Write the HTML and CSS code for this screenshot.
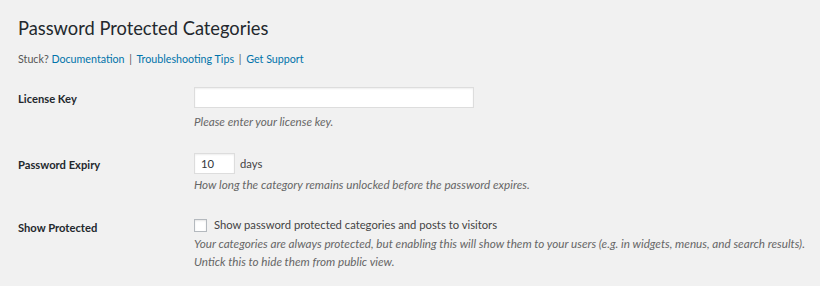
FILE: index.html
```html
<!DOCTYPE html>
<html>
<head>
<meta charset="utf-8">
<link rel="stylesheet" href="styles.css">
</head>
<body>
<div class="wrap">
  <h1 class="title">Password Protected Categories</h1>
  <p class="help">Stuck? <a href="#">Documentation</a> <span class="sep">|</span> <a href="#">Troubleshooting Tips</a> <span class="sep">|</span> <a href="#">Get Support</a></p>
  <div class="form">
    <div class="row row-license">
      <div class="label">License Key</div>
      <div class="field">
        <input class="text-input" type="text">
        <p class="desc">Please enter your license key.</p>
      </div>
    </div>
    <div class="row row-expiry">
      <div class="label">Password Expiry</div>
      <div class="field">
        <div class="inline"><input class="num-input" type="text" value="10"><span class="unit">days</span></div>
        <p class="desc">How long the category remains unlocked before the password expires.</p>
      </div>
    </div>
    <div class="row row-show">
      <div class="label">Show Protected</div>
      <div class="field">
        <label class="check"><span class="box"></span>Show password protected categories and posts to visitors</label>
        <p class="desc">Your categories are always protected, but enabling this will show them to your users (e.g. in widgets, menus, and search results).<br>Untick this to hide them from public view.</p>
      </div>
    </div>
  </div>
</div>
</body>
</html>
```
FILE: styles.css
```css
html, body {
  margin: 0;
  padding: 0;
  background: #f1f1f1;
}
body {
  font-family: Lato, "Open Sans", sans-serif;
  color: #444;
  font-size: 11.25px;
  width: 820px;
  height: 286px;
  overflow: hidden;
}
.wrap {
  padding: 13px 0 0 18px;
}
.title {
  margin: 0;
  font-size: 18.3px;
  font-weight: 400;
  color: #23282d;
  line-height: 30px;
}
.help {
  margin: 8px 0 0;
  font-size: 10.7px;
  line-height: 16px;
  color: #555;
}
.help a {
  color: #0073aa;
  text-decoration: none;
}
.sep {
  margin: 0 2px;
}
.form {
  margin-top: 20px;
}
.row {
  display: flex;
}
.label {
  width: 176px;
  flex: none;
  font-size: 11.2px;
  font-weight: 700;
  color: #23282d;
  line-height: 18px;
}
.row-license { height: 66px; }
.row-license .label { padding-top: 3px; }
.row-expiry { height: 62px; }
.row-expiry .label { padding-top: 3px; }
.row-show .label { padding-top: 4px; }
.field {
  display: flex;
  flex-direction: column;
}
.text-input, .num-input {
  box-sizing: border-box;
  border: 1px solid #ddd;
  box-shadow: inset 0 1px 2px rgba(0,0,0,0.07);
  background: #fff;
  height: 21px;
  margin: 0;
  padding: 0 6px;
  font-family: inherit;
  font-size: 11.25px;
  color: #32373c;
  outline: none;
}
.text-input { width: 280px; }
.num-input { width: 41px; }
.inline {
  display: flex;
  align-items: center;
}
.unit {
  margin-left: 5px;
}
.desc {
  margin: 1px 0 0;
  font-size: 11.7px;
  font-style: italic;
  color: #666;
  line-height: 18px;
}
.row-license .desc { margin-top: 4px; }
.check {
  display: flex;
  align-items: center;
  line-height: 18px;
  margin-top: 1px;
}
.box {
  box-sizing: border-box;
  width: 13px;
  height: 13px;
  border: 1px solid #b4b9be;
  background: #fff;
  box-shadow: inset 0 1px 2px rgba(0,0,0,0.1);
  margin-right: 7px;
}
.row-show .desc { margin-top: 0; }
```
